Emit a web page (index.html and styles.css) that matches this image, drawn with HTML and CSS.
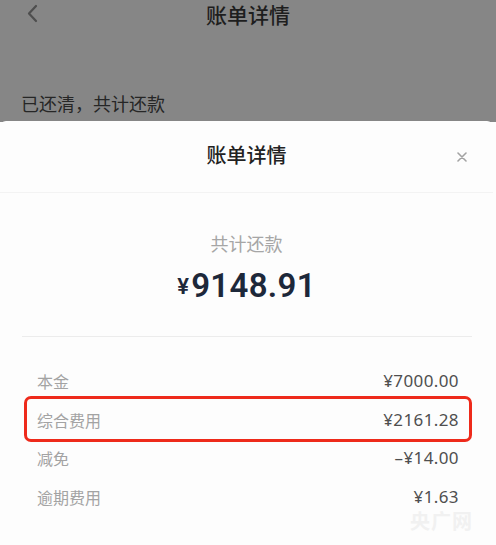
FILE: index.html
```html
<!DOCTYPE html>
<html lang="zh-CN">
<head>
<meta charset="utf-8">
<title>账单详情</title>
<link rel="stylesheet" href="styles.css">
</head>
<body>
<div class="backdrop">
  <div class="nav">
    <div class="nav-left">
      <svg class="back" width="12" height="19" viewBox="0 0 12 19"><path d="M10 2 L3 9.5 L10 17" fill="none" stroke="#4e4e4e" stroke-width="2.2" stroke-linecap="round" stroke-linejoin="round"/></svg>
    </div>
    <div class="nav-title">账单详情</div>
    <div class="nav-right"></div>
  </div>
  <div class="status">已还清，共计还款</div>
</div>
<div class="sheet">
  <div class="sheet-head">
    <div></div>
    <div class="sheet-title">账单详情</div>
    <div class="close-wrap">
      <svg class="close" width="10" height="10" viewBox="0 0 10 10"><path d="M1 1 L9 9 M9 1 L1 9" stroke="#a3a3a3" stroke-width="1.6" stroke-linecap="round"/></svg>
    </div>
  </div>
  <div class="summary">
    <div class="summary-label">共计还款</div>
    <div class="summary-amount"><span class="yen">¥</span>9148.91</div>
  </div>
  <div class="divider"></div>
  <div class="rows">
    <div class="row"><span class="label">本金</span><span class="value">¥7000.00</span></div>
    <div class="row highlighted"><span class="label">综合费用</span><span class="value">¥2161.28</span></div>
    <div class="row"><span class="label">减免</span><span class="value">–¥14.00</span></div>
    <div class="row"><span class="label">逾期费用</span><span class="value">¥1.63</span></div>
  </div>
  <div class="watermark">央广网</div>
</div>
</body>
</html>
```

FILE: styles.css
```css
html, body {
  margin: 0;
  padding: 0;
  height: 100%;
  background: #fdfdfd;
  font-family: "Noto Sans CJK SC", "Noto Sans", sans-serif;
  overflow: hidden;
}

.backdrop {
  background: #868686;
  height: 122px;
  box-sizing: border-box;
}

.nav {
  display: grid;
  grid-template-columns: 1fr auto 1fr;
  align-items: center;
  height: 28px;
}

.nav-left {
  padding-left: 26px;
  display: flex;
  align-items: center;
}

.back {
  display: block;
  margin-top: -2px;
}

.nav-title {
  font-size: 21px;
  line-height: 28px;
  color: #1e1e1e;
  font-weight: 500;
}

.status {
  margin-top: 63px;
  padding-left: 21px;
  font-size: 18px;
  line-height: 24px;
  color: #262626;
}

.sheet {
  background: #fdfdfd;
  margin-top: -1px;
  margin-right: 3px;
  border-radius: 6px 6px 0 0;
  position: relative;
  height: 430px;
}

.sheet-head {
  display: grid;
  grid-template-columns: 1fr auto 1fr;
  align-items: center;
  padding-top: 20px;
  height: 51px;
  border-bottom: 1px solid #f3f3f3;
  box-sizing: content-box;
}

.sheet-title {
  font-size: 20px;
  line-height: 28px;
  color: #222;
  font-weight: 500;
  align-self: start;
}

.close-wrap {
  display: flex;
  justify-content: flex-end;
  padding-right: 26px;
  align-self: start;
  padding-top: 11px;
}

.close {
  display: block;
}

.summary {
  text-align: center;
  padding-top: 38px;
}

.summary-label {
  font-size: 18px;
  line-height: 24px;
  color: #a6a6a6;
}

.summary-amount {
  margin-top: 11px;
  font-family: Roboto, "Noto Sans", sans-serif;
  font-weight: 600;
  font-size: 33px;
  line-height: 40px;
  color: #1d283a;
  letter-spacing: 0.3px;
}

.yen {
  font-size: 22px;
  margin-right: 2px;
  vertical-align: 3px;
}

.divider {
  margin: 29px 21px 0 22px;
  height: 1px;
  background: #ececec;
}

.rows {
  margin: 25px 21px 0 24px;
}

.row {
  display: flex;
  justify-content: space-between;
  align-items: center;
  height: 38.5px;
  padding: 0 13px;
  position: relative;
}

.label {
  font-size: 16px;
  line-height: 20px;
  color: #a3a3a3;
}

.value {
  font-family: "Noto Sans", sans-serif;
  font-size: 17px;
  line-height: 20px;
  color: #4f4f4f;
  letter-spacing: 0.4px;
}

.highlighted::after {
  content: "";
  position: absolute;
  left: 0;
  right: 0;
  top: -5px;
  bottom: -3px;
  border: 3px solid #ee2a1b;
  border-radius: 7px;
}

.watermark {
  position: absolute;
  right: 20px;
  top: 390px;
  font-size: 20px;
  line-height: 20px;
  font-weight: 700;
  color: #f1f1f1;
  letter-spacing: 1px;
}
```
